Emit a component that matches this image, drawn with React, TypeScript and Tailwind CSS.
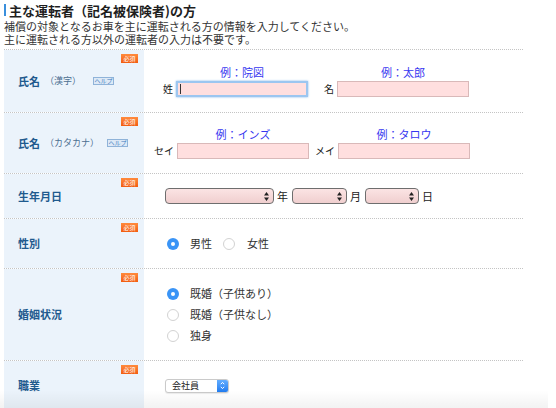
import React from 'react';

const Required = () => (
  <span className="absolute right-[6px] top-[4px] flex h-[9px] w-[17px] items-center justify-center bg-linear-to-b from-[#ff8a3c] to-[#f25c0e] text-[6px] leading-none text-white">
    必須
  </span>
);

const Help = ({ className = '' }: { className?: string }) => (
  <span className={`inline-flex h-[8px] w-[21px] items-center justify-center border border-[#8fb3d9] bg-[#dde9f6] text-[6px] leading-none text-[#3f7cc0] ${className}`}>
    ヘルプ
  </span>
);

const Row = ({
  label,
  sub,
  help,
  height,
  children,
}: {
  label: string;
  sub?: React.ReactNode;
  help?: React.ReactNode;
  height: string;
  children: React.ReactNode;
}) => (
  <div className={`flex border-b border-dotted border-[#c4c4c4] ${height}`}>
    <div className="relative flex w-[140px] shrink-0 items-center bg-[#ebf3fb] pl-[14px]">
      <Required />
      <span className="text-[11px] font-bold leading-none text-[#1f5a8e]">{label}</span>
      {sub}
      {help}
    </div>
    <div className="flex flex-1 items-center">{children}</div>
  </div>
);

const NameField = ({
  label,
  hint,
  focused,
  className = '',
}: {
  label: string;
  hint: string;
  focused?: boolean;
  className?: string;
}) => (
  <div className={`flex items-end ${className}`}>
    <span className="w-[26px] pr-[3px] text-right text-[10px] leading-[16px] text-[#222]">{label}</span>
    <div className="flex flex-col items-center">
      <span className="text-[11px] leading-[13px] text-[#3737f0]">{hint}</span>
      <div
        className={`relative mt-[2px] h-[16px] w-[132px] bg-[#ffdfdf] ${
          focused
            ? 'border-2 border-[#9cc6f0] shadow-[0_0_2px_#7fb3ea]'
            : 'border border-[#d9b9b9]'
        }`}
      >
        {focused && <span className="absolute left-[2px] top-[1px] h-[10px] w-px bg-[#333]" />}
      </div>
    </div>
  </div>
);

const UpDown = () => (
  <svg width="5" height="9" viewBox="0 0 5 9">
    <path d="M2.5 0L5 3.5H0Z M2.5 9L0 5.5H5Z" fill="#222" />
  </svg>
);

const DateSelect = ({ w }: { w: string }) => (
  <div className={`flex h-[16px] ${w} items-center justify-end rounded-[4px] border border-[#6e6e6e] bg-linear-to-b from-[#fbe4e4] to-[#f0cfcf] pr-[4px]`}>
    <UpDown />
  </div>
);

const Radio = ({ checked }: { checked?: boolean }) =>
  checked ? (
    <span className="flex h-[12px] w-[12px] shrink-0 items-center justify-center rounded-full bg-[#3a94f6]">
      <span className="h-[4px] w-[4px] rounded-full bg-white" />
    </span>
  ) : (
    <span className="block h-[12px] w-[12px] shrink-0 rounded-full border border-[#d2d2d2] bg-white" />
  );

export default function App() {
  return (
    <div className="relative h-[408px] w-[556px] overflow-hidden bg-white font-['Noto_Sans_CJK_JP','Noto_Sans',sans-serif] text-[#333]">
      <div className="flex h-[20px] items-center pl-[4px]">
        <span className="h-[12px] w-[2px] bg-[#3a8fdc]" />
        <h1 className="ml-[3px] text-[13px] font-bold leading-none text-[#1e1e1e]">主な運転者（記名被保険者)の方</h1>
      </div>
      <p className="pl-[4px] text-[11px] leading-[13px] text-[#333]">
        補償の対象となるお車を主に運転される方の情報を入力してください。
        <br />
        主に運転される方以外の運転者の入力は不要です。
      </p>

      <div className="ml-[4px] mt-[3px] w-[519px] border-t border-dotted border-[#c4c4c4]">
        <Row
          label="氏名"
          height="h-[63px]"
          sub={<span className="ml-[5px] text-[9px] text-[#4b6f91]">（漢字）</span>}
          help={<Help className="ml-[12px]" />}
        >
          <div className="flex items-center pl-[6px]">
            <NameField label="姓" hint="例：院図" focused />
            <NameField label="名" hint="例：太郎" className="ml-[3px]" />
          </div>
        </Row>

        <Row
          label="氏名"
          height="h-[61px]"
          sub={<span className="ml-[5px] text-[9px] text-[#4b6f91]">（カタカナ）</span>}
          help={<Help className="ml-[8px]" />}
        >
          <div className="flex items-center pl-[7px]">
            <NameField label="セイ" hint="例：インズ" />
            <NameField label="メイ" hint="例：タロウ" className="ml-[3px]" />
          </div>
        </Row>

        <Row label="生年月日" height="h-[45px]">
          <div className="flex items-center pl-[21px] text-[11px] text-[#222]">
            <DateSelect w="w-[109px]" />
            <span className="ml-[3px] mr-[4px]">年</span>
            <DateSelect w="w-[55px]" />
            <span className="ml-[3px] mr-[4px]">月</span>
            <DateSelect w="w-[54px]" />
            <span className="ml-[3px]">日</span>
          </div>
        </Row>

        <Row label="性別" height="h-[50px]">
          <div className="flex items-center pl-[23px] text-[11px] text-[#333]">
            <Radio checked />
            <span className="ml-[11px]">男性</span>
            <div className="ml-[11px]">
              <Radio />
            </div>
            <span className="ml-[12px]">女性</span>
          </div>
        </Row>

        <Row label="婚姻状況" height="h-[92px]">
          <div className="flex flex-col pl-[23px] text-[11px] text-[#333]">
            {[
              { t: '既婚（子供あり）', c: true },
              { t: '既婚（子供なし）', c: false },
              { t: '独身', c: false },
            ].map((r) => (
              <div key={r.t} className="flex h-[21px] items-center">
                <Radio checked={r.c} />
                <span className="ml-[11px]">{r.t}</span>
              </div>
            ))}
          </div>
        </Row>

        <Row label="職業" height="h-[50px]">
          <div className="pl-[21px]">
            <div className="flex h-[14px] w-[64px] overflow-hidden rounded-[3px] border border-[#cacaca] bg-white shadow-[0_1px_1px_rgba(0,0,0,0.08)]">
              <span className="flex-1 pl-[6px] text-[9px] leading-[12px] text-[#222]">会社員</span>
              <span className="flex w-[11px] items-center justify-center bg-linear-to-b from-[#62adff] to-[#1f7cf0]">
                <svg width="5" height="9" viewBox="0 0 5 9">
                  <path d="M0.8 3.2L2.5 1.4L4.2 3.2 M0.8 5.8L2.5 7.6L4.2 5.8" stroke="#fff" strokeWidth="1" fill="none" />
                </svg>
              </span>
            </div>
          </div>
        </Row>
      </div>

      <div className="pointer-events-none absolute bottom-0 left-0 h-[18px] w-[548px] bg-linear-to-b from-transparent to-black/5" />
    </div>
  );
}
